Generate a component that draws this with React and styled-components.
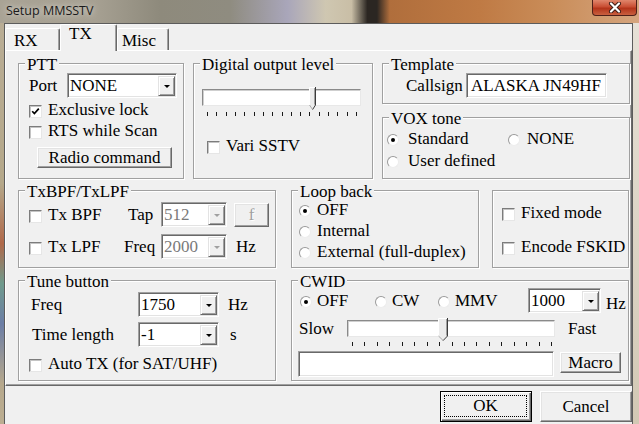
import styled, { createGlobalStyle } from "styled-components";

const SERIF = `"Liberation Serif", "Times New Roman", serif`;

const Global = createGlobalStyle`
  html, body { margin: 0; padding: 0; }
  body { background: #f0f0f0; overflow: hidden; font-family: ${SERIF}; }
  * { box-sizing: border-box; }
`;

const Window = styled.div`
  width: 639px;
  height: 424px;
  display: flex;
  flex-direction: column;
  font-family: ${SERIF};
  font-size: 17px;
  line-height: 18px;
  color: #000;
  overflow: hidden;
`;

const TitleBar = styled.div`
  height: 23px;
  flex: none;
  display: flex;
  align-items: flex-start;
  justify-content: space-between;
  background: linear-gradient(
    90deg,
    #a9a395 0%,
    #a6a092 15%,
    #8e8a7c 25%,
    #8f8c80 36%,
    #a9a6ba 45%,
    #cfc7b1 51%,
    #c9bea6 55%,
    #2b2622 57.5%,
    #2b2622 59%,
    #b06e3c 61%,
    #bf7a44 75%,
    #c98c58 86%,
    #d5a57e 100%
  );
`;

const Title = styled.div`
  font-family: "Open Sans", "Noto Sans", sans-serif;
  font-size: 12.5px;
  line-height: 16px;
  padding: 3px 0 0 6px;
  color: #1a1a1a;
  text-shadow: 0 0 6px rgba(255, 255, 255, 0.8);
`;

const CloseButton = styled.div`
  width: 45px;
  height: 16px;
  margin-right: 2px;
  border: 1px solid #4e2019;
  border-top: none;
  border-radius: 0 0 4px 4px;
  background: linear-gradient(#e0866c 0%, #c94e33 45%, #b3341a 55%, #c9603f 100%);
  display: flex;
  align-items: center;
  justify-content: center;
`;

const Body = styled.div`
  flex: 1;
  display: flex;
  min-height: 0;
`;

const Frame = styled.div`
  flex: none;
  width: ${(p) => p.$w}px;
  background: ${(p) =>
    p.$side === "left"
      ? "linear-gradient(#b9ad95 0%, #b5a88a 40%, #b0694a 55%, #6f9a8c 65%, #6c7ea6 75%, #b6a88c 90%, #bcae92 100%)"
      : "linear-gradient(#e6e0d6 0%, #ddd5c6 50%, #d2c8b4 100%)"};
`;

const Client = styled.div`
  width: 629px;
  flex: none;
  display: flex;
  flex-direction: column;
  background: #f0f0f0;
  border-top: 1px solid #5c5c5c;
  border-left: 1px solid #5c5c5c;
  border-right: 1px solid #5c5c5c;
`;

const TabStrip = styled.div`
  height: 26px;
  display: flex;
  align-items: flex-end;
  position: relative;
  z-index: 1;
`;

const Tab = styled.div`
  width: ${(p) => p.$w}px;
  height: ${(p) => (p.$active ? 27 : 22)}px;
  margin-bottom: ${(p) => (p.$active ? -1 : 0)}px;
  padding: ${(p) => (p.$active ? "0" : "3px")} 0 0 ${(p) => p.$pl}px;
  background: #f0f0f0;
  border-top: 1px solid #fff;
  border-left: 1px solid #fff;
  border-right: 1px solid #696969;
  border-radius: 2px 2px 0 0;
  box-shadow: inset -1px 0 0 #a0a0a0;
`;

const Panel = styled.div`
  height: 336px;
  padding: 12px 0 0 12px;
  border-top: 1px solid #fff;
  border-left: 1px solid #fff;
  border-right: 1px solid #696969;
  border-bottom: 1px solid #696969;
  box-shadow: inset -1px -1px 0 #a0a0a0;
  display: flex;
  flex-direction: column;
`;

const PanelRow = styled.div`
  display: flex;
  align-items: flex-start;
  gap: ${(p) => p.$gap}px;
  margin-top: ${(p) => p.$mt || 0}px;
`;

const Stack = styled.div`
  display: flex;
  flex-direction: column;
  gap: ${(p) => p.$gap}px;
`;

const Group = styled.div`
  position: relative;
  flex: none;
  width: ${(p) => p.$w}px;
  height: ${(p) => p.$h}px;
  border: 1px solid #a0a0a0;
  box-shadow: inset 1px 1px 0 #fff, 1px 1px 0 #fff;
  display: flex;
  flex-direction: column;
  align-items: flex-start;
`;

const Legend = styled.span`
  position: absolute;
  left: 6px;
  top: -8px;
  padding: 0 2px;
  background: #f0f0f0;
  white-space: nowrap;
`;

const Row = styled.div`
  display: flex;
  align-items: ${(p) => p.$align || "center"};
  height: ${(p) => (p.$h ? p.$h + "px" : "auto")};
  margin-top: ${(p) => p.$mt || 0}px;
  padding-left: ${(p) => p.$pl || 0}px;
`;

const Text = styled.span`
  flex: none;
  white-space: nowrap;
  width: ${(p) => (p.$w ? p.$w + "px" : "auto")};
  margin-left: ${(p) => p.$ml || 0}px;
  align-self: ${(p) => p.$self || "auto"};
  line-height: ${(p) => p.$lh || 18}px;
`;

const CheckItem = styled.div`
  display: flex;
  align-items: flex-start;
  flex: none;
  height: 18px;
  width: ${(p) => (p.$w ? p.$w + "px" : "auto")};
  margin-top: ${(p) => p.$mt || 0}px;
  margin-left: ${(p) => p.$ml || 0}px;
`;

const Box = styled.span`
  flex: none;
  width: 13px;
  height: 13px;
  margin: 4px 6px 0 0;
  background: #fff;
  border: 1px solid;
  border-color: #7c7c7c #e6e6e6 #e6e6e6 #7c7c7c;
  box-shadow: inset 1px 1px 0 #c4c4c4;
  display: flex;
  align-items: center;
  justify-content: center;
`;

const RadioItem = styled.div`
  display: flex;
  align-items: flex-start;
  flex: none;
  height: 18px;
  width: ${(p) => (p.$w ? p.$w + "px" : "auto")};
  margin-top: ${(p) => p.$mt || 0}px;
`;

const Circle = styled.span`
  flex: none;
  width: 12px;
  height: 12px;
  margin: 4px ${(p) => p.$gap ?? 6}px 0 0;
  border-radius: 50%;
  background: #fff;
  border: 1px solid;
  border-color: #9a9a9a #ececec #ececec #9a9a9a;
  display: flex;
  align-items: center;
  justify-content: center;

  &::after {
    content: "";
    width: 4px;
    height: 4px;
    border-radius: 50%;
    background: ${(p) => (p.$on ? "#000" : "transparent")};
  }
`;

const ComboBox = styled.div`
  flex: none;
  width: ${(p) => p.$w}px;
  height: 25px;
  display: flex;
  background: #fff;
  border: 1px solid;
  border-color: #a0a0a0 #fff #fff #a0a0a0;
  box-shadow: inset 1px 1px 0 #696969, inset -1px -1px 0 #e3e3e3;
  color: ${(p) => (p.$disabled ? "#7a7a7a" : "#000")};
`;

const ComboValue = styled.span`
  flex: 1;
  display: flex;
  align-items: center;
  padding-left: 2px;
  white-space: nowrap;
  overflow: hidden;
`;

const DropButton = styled.span`
  flex: none;
  width: 17px;
  margin: 2px 1px 1px 0;
  background: #f0f0f0;
  border: 1px solid;
  border-color: #e3e3e3 #696969 #696969 #e3e3e3;
  box-shadow: inset 1px 1px 0 #fff, inset -1px -1px 0 #a0a0a0;
  display: flex;
  align-items: center;
  justify-content: center;

  &::after {
    content: "";
    border-top: 3px solid ${(p) => (p.$disabled ? "#a0a0a0" : "#000")};
    border-left: 3px solid transparent;
    border-right: 3px solid transparent;
  }
`;

const TextField = styled.div`
  flex: none;
  width: ${(p) => p.$w}px;
  height: ${(p) => p.$h}px;
  padding-left: 4px;
  display: flex;
  align-items: center;
  background: #fff;
  border: 1px solid;
  border-color: #a0a0a0 #fff #fff #a0a0a0;
  box-shadow: inset 1px 1px 0 #696969, inset -1px -1px 0 #e3e3e3;
  white-space: nowrap;
`;

const PushButton = styled.div`
  flex: none;
  width: ${(p) => p.$w}px;
  height: ${(p) => p.$h}px;
  margin-left: ${(p) => p.$ml || 0}px;
  margin-top: ${(p) => p.$mt || 0}px;
  display: flex;
  align-items: center;
  justify-content: center;
  background: #f0f0f0;
  border: 1px solid;
  border-color: ${(p) => (p.$default ? "#000" : "#fff #696969 #696969 #fff")};
  box-shadow: ${(p) =>
    p.$default
      ? "inset 1px 1px 0 #fff, inset -1px -1px 0 #696969, inset -2px -2px 0 #a0a0a0"
      : "inset -1px -1px 0 #a0a0a0, inset 1px 1px 0 #e3e3e3"};
  color: ${(p) => (p.$disabled ? "#a0a0a0" : "#000")};
  text-shadow: ${(p) => (p.$disabled ? "1px 1px 0 #fff" : "none")};
`;

const FocusRect = styled.span`
  align-self: stretch;
  flex: 1;
  margin: 3px 4px 4px 3px;
  border: 1px dotted #000;
  display: flex;
  align-items: center;
  justify-content: center;
`;

const ButtonBar = styled.div`
  flex: 1;
  display: flex;
  justify-content: flex-end;
  align-items: flex-start;
  gap: 8px;
  padding-top: 5px;
`;

const SliderWrap = styled.div`
  flex: none;
  width: ${(p) => p.$w}px;
  margin-top: ${(p) => p.$mt || 0}px;
  margin-left: ${(p) => p.$ml || 0}px;
`;

const Track = styled.div`
  position: relative;
  height: 17px;
  background: #fff;
  border: 1px solid;
  border-color: #8a8a8a #e8e8e8 #e8e8e8 #8a8a8a;
  box-shadow: inset 1px 1px 0 #cfcfcf;
`;

const Thumb = styled.svg`
  position: absolute;
  top: -3px;
  left: ${(p) => p.$pos}px;
`;

const Ticks = styled.div`
  display: flex;
  justify-content: space-between;
  margin-top: ${(p) => p.$gap}px;
  padding: 0 ${(p) => p.$pr}px 0 5px;
`;

const Tick = styled.span`
  width: 1px;
  height: 4px;
  background: #1a1a1a;
`;

function Check({ label, on, w, mt, ml }) {
  return (
    <CheckItem $w={w} $mt={mt} $ml={ml}>
      <Box>
        {on && (
          <svg width="9" height="9" viewBox="0 0 9 9">
            <path d="M1.2 4.2 L3.4 6.6 L7.8 1.6" stroke="#000" strokeWidth="1.7" fill="none" />
          </svg>
        )}
      </Box>
      <Text>{label}</Text>
    </CheckItem>
  );
}

function Radio({ label, on, w, gap, mt }) {
  return (
    <RadioItem $w={w} $mt={mt}>
      <Circle $on={on} $gap={gap} />
      <Text>{label}</Text>
    </RadioItem>
  );
}

function Combo({ value, w, disabled }) {
  return (
    <ComboBox $w={w} $disabled={disabled}>
      <ComboValue>{value}</ComboValue>
      <DropButton $disabled={disabled} />
    </ComboBox>
  );
}

function Slider({ w, pos, thumbW, tickGap, tickPr, mt, ml }) {
  const tw = thumbW;
  return (
    <SliderWrap $w={w} $mt={mt} $ml={ml}>
      <Track>
        <Thumb $pos={pos} width={tw} height="23" viewBox={`0 0 ${tw} 23`}>
          <polygon points={`0,0 ${tw},0 ${tw},18 ${tw / 2},23 0,18`} fill="#ececec" />
          <path d={`M0.5 18 V0.5 H${tw - 1}`} stroke="#fff" fill="none" />
          <path d={`M${tw - 0.5} 0 V18 L${tw / 2} 22.7`} stroke="#3c3c3c" fill="none" />
          <path d={`M${tw - 1.5} 1 V17.6`} stroke="#a0a0a0" fill="none" />
          <path d={`M0.5 18 L${tw / 2} 22.4`} stroke="#a8a8a8" fill="none" />
        </Thumb>
      </Track>
      <Ticks $gap={tickGap} $pr={tickPr}>
        {Array.from({ length: 17 }, (_, i) => (
          <Tick key={i} />
        ))}
      </Ticks>
    </SliderWrap>
  );
}

export default function App() {
  return (
    <Window>
      <Global />
      <TitleBar>
        <Title>Setup MMSSTV</Title>
        <CloseButton>
          <svg width="14" height="11" viewBox="0 0 14 11">
            <path d="M3 1.5 L11 9.5 M11 1.5 L3 9.5" stroke="#3a1a14" strokeWidth="4" strokeLinecap="round" />
            <path d="M3 1.5 L11 9.5 M11 1.5 L3 9.5" stroke="#fff" strokeWidth="2.2" strokeLinecap="round" />
          </svg>
        </CloseButton>
      </TitleBar>
      <Body>
        <Frame $side="left" $w={4} />
        <Client>
          <TabStrip>
            <Tab $w={55} $pl={8}>RX</Tab>
            <Tab $w={57} $pl={8} $active>TX</Tab>
            <Tab $w={52} $pl={4}>Misc</Tab>
          </TabStrip>
          <Panel>
            <PanelRow $gap={9}>
              <Group $w={166} $h={116}>
                <Legend>PTT</Legend>
                <Row $h={25} $mt={9} $pl={10}>
                  <Text $w={38}>Port</Text>
                  <Combo value="NONE" w={110} />
                </Row>
                <Check label="Exclusive lock" on mt={3} ml={10} />
                <Check label="RTS while Scan" mt={3} ml={10} />
                <PushButton $w={135} $h={21} $mt={7} $ml={18}>
                  <Text>Radio command</Text>
                </PushButton>
              </Group>

              <Group $w={180} $h={116}>
                <Legend>Digital output level</Legend>
                <Slider w={159} pos={106} thumbW={7} tickGap={6} tickPr={4} mt={25} ml={8} />
                <Check label="Vari SSTV" mt={21} ml={13} />
              </Group>

              <Stack $gap={13}>
                <Group $w={248} $h={41}>
                  <Legend>Template</Legend>
                  <Row $h={25} $mt={9} $pl={23}>
                    <Text $w={60}>Callsign</Text>
                    <TextField $w={141} $h={25}>
                      <Text>ALASKA JN49HF</Text>
                    </TextField>
                  </Row>
                </Group>
                <Group $w={248} $h={62}>
                  <Legend>VOX tone</Legend>
                  <Row $mt={12} $pl={4}>
                    <Radio label="Standard" on w={121} gap={9} />
                    <Radio label="NONE" gap={7} />
                  </Row>
                  <Row $mt={4} $pl={4}>
                    <Radio label="User defined" gap={9} />
                  </Row>
                </Group>
              </Stack>
            </PanelRow>

            <PanelRow $gap={15} $mt={11}>
              <Group $w={258} $h={78}>
                <Legend>TxBPF/TxLPF</Legend>
                <Row $h={25} $mt={11} $pl={10}>
                  <Check label="Tx BPF" w={99} />
                  <Text $w={33}>Tap</Text>
                  <Combo value="512" w={66} disabled />
                  <PushButton $w={35} $h={24} $ml={7} $disabled>
                    <Text>f</Text>
                  </PushButton>
                </Row>
                <Row $h={25} $mt={7} $pl={10}>
                  <Check label="Tx LPF" w={95} />
                  <Text $w={37}>Freq</Text>
                  <Combo value="2000" w={66} disabled />
                  <Text $ml={9}>Hz</Text>
                </Row>
              </Group>

              <PanelRow $gap={13}>
                <Group $w={188} $h={78}>
                  <Legend>Loop back</Legend>
                  <Row $mt={10} $pl={7}>
                    <Radio label="OFF" on />
                  </Row>
                  <Row $mt={3} $pl={7}>
                    <Radio label="Internal" />
                  </Row>
                  <Row $mt={3} $pl={7}>
                    <Radio label="External (full-duplex)" />
                  </Row>
                </Group>
                <Group $w={137} $h={78}>
                  <Check label="Fixed mode" mt={13} ml={9} />
                  <Check label="Encode FSKID" mt={16} ml={9} />
                </Group>
              </PanelRow>
            </PanelRow>

            <PanelRow $gap={15} $mt={12}>
              <Group $w={258} $h={101}>
                <Legend>Tune button</Legend>
                <Row $h={25} $mt={11} $pl={12}>
                  <Text $w={107}>Freq</Text>
                  <Combo value="1750" w={81} />
                  <Text $ml={9}>Hz</Text>
                </Row>
                <Row $h={25} $mt={5} $pl={13}>
                  <Text $w={106}>Time length</Text>
                  <Combo value="-1" w={81} />
                  <Text $ml={11}>s</Text>
                </Row>
                <Check label="Auto TX (for SAT/UHF)" mt={8} ml={10} />
              </Group>

              <Group $w={338} $h={101}>
                <Legend>CWID</Legend>
                <Row $h={25} $mt={7} $pl={8}>
                  <Radio label="OFF" on w={75} gap={5} />
                  <Radio label="CW" w={63} gap={5} />
                  <Radio label="MMV" w={90} gap={5} />
                  <Combo value="1000" w={73} />
                  <Text $ml={5} $self="flex-end">Hz</Text>
                </Row>
                <Row $mt={7} $pl={7} $align="flex-start">
                  <Text $w={48} $lh={17}>Slow</Text>
                  <Slider w={208} pos={90} thumbW={10} tickGap={5} tickPr={3} />
                  <Text $ml={13} $lh={17}>Fast</Text>
                </Row>
                <Row $mt={5} $pl={6} $align="flex-start">
                  <TextField $w={256} $h={26} />
                  <PushButton $w={61} $h={21} $ml={6} $mt={1}>
                    <Text>Macro</Text>
                  </PushButton>
                </Row>
              </Group>
            </PanelRow>
          </Panel>
          <ButtonBar>
            <PushButton $w={92} $h={31} $default>
              <FocusRect>
                <Text>OK</Text>
              </FocusRect>
            </PushButton>
            <PushButton $w={92} $h={31}>
              <Text>Cancel</Text>
            </PushButton>
          </ButtonBar>
        </Client>
        <Frame $side="right" $w={6} />
      </Body>
    </Window>
  );
}
